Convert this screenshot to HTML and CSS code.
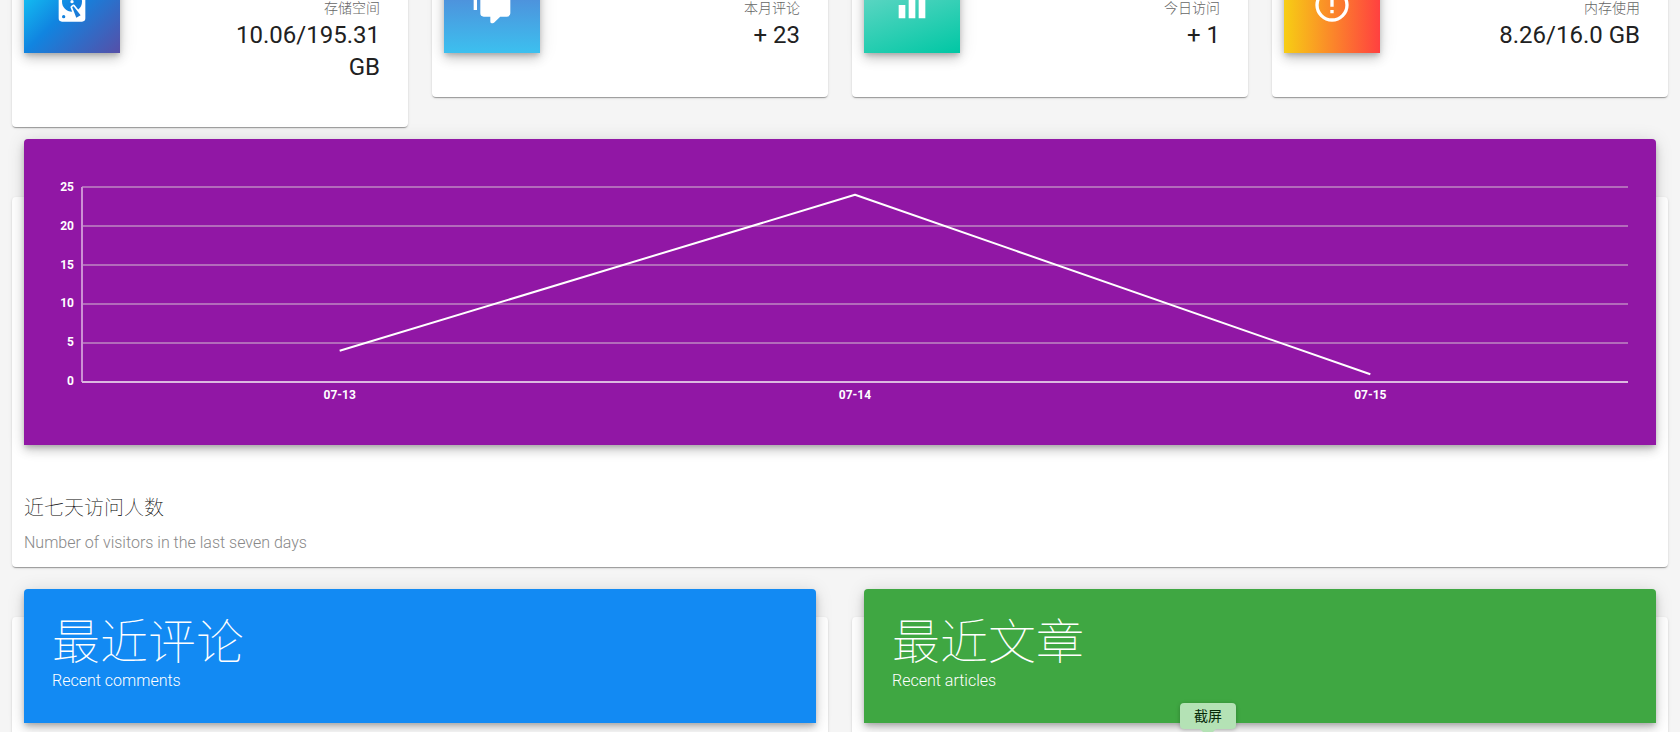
FILE: index.html
```html
<!DOCTYPE html>
<html lang="zh-CN">
<head>
<meta charset="utf-8">
<title>Dashboard</title>
<link rel="stylesheet" href="styles.css">
</head>
<body>
<main class="dashboard">
  <section class="stats">
    <article class="card stat">
      <div class="tile tile-storage">
        <svg class="icon" viewBox="0 0 24 24" aria-hidden="true"><path d="M6,2H18A2,2 0 0,1 20,4V20A2,2 0 0,1 18,22H6A2,2 0 0,1 4,20V4A2,2 0 0,1 6,2M12,4A6,6 0 0,0 6,10C6,13.31 8.69,16 12.1,16L11.22,13.77C10.95,13.29 11.11,12.68 11.59,12.4L12.45,11.9C12.93,11.63 13.54,11.79 13.82,12.27L15.74,14.69C17.12,13.59 18,11.9 18,10A6,6 0 0,0 12,4M12,9A1,1 0 0,1 13,10A1,1 0 0,1 12,11A1,1 0 0,1 11,10A1,1 0 0,1 12,9M7,18A1,1 0 0,0 6,19A1,1 0 0,0 7,20A1,1 0 0,0 8,19A1,1 0 0,0 7,18M12.09,13.27L14.58,19.58L17.17,18.08L12.95,12.77L12.09,13.27Z"/></svg>
      </div>
      <div class="stat-text">
        <p class="stat-label">存储空间</p>
        <p class="stat-value">10.06/195.31 GB</p>
      </div>
    </article>
    <article class="card stat">
      <div class="tile tile-comments">
        <svg class="icon" viewBox="0 0 24 24" aria-hidden="true"><path d="M12,23A1,1 0 0,1 11,22V19H7A2,2 0 0,1 5,17V7A2,2 0 0,1 7,5H21A2,2 0 0,1 23,7V17A2,2 0 0,1 21,19H16.9L13.2,22.71C13,22.89 12.76,23 12.5,23H12M3,15H1V3A2,2 0 0,1 3,1H19V3H3V15Z"/></svg>
      </div>
      <div class="stat-text">
        <p class="stat-label">本月评论</p>
        <p class="stat-value">+ 23</p>
      </div>
    </article>
    <article class="card stat">
      <div class="tile tile-visits">
        <svg class="icon" viewBox="0 0 24 24" aria-hidden="true"><path d="M10 20h4V4h-4v16zM4 20h4v-8H4v8zM16 9v11h4V9h-4z"/></svg>
      </div>
      <div class="stat-text">
        <p class="stat-label">今日访问</p>
        <p class="stat-value">+ 1</p>
      </div>
    </article>
    <article class="card stat">
      <div class="tile tile-memory">
        <svg class="icon" viewBox="0 0 24 24" aria-hidden="true"><path d="M11,15H13V17H11V15M11,7H13V13H11V7M12,2C6.47,2 2,6.5 2,12A10,10 0 0,0 12,22A10,10 0 0,0 22,12A10,10 0 0,0 12,2M12,20A8,8 0 0,1 4,12A8,8 0 0,1 12,4A8,8 0 0,1 20,12A8,8 0 0,1 12,20Z"/></svg>
      </div>
      <div class="stat-text">
        <p class="stat-label">内存使用</p>
        <p class="stat-value">8.26/16.0 GB</p>
      </div>
    </article>
  </section>

  <section class="card visitors">
    <div class="chart">
      <div class="y-labels"><span>25</span><span>20</span><span>15</span><span>10</span><span>5</span><span>0</span></div>
      <svg class="plot" viewBox="0 0 600 25" preserveAspectRatio="none" role="img" aria-label="近七天访问人数">
        <path class="grid-line" d="M0 0H600M0 5H600M0 10H600M0 15H600M0 20H600"/>
        <path class="y-axis" d="M0 0V25"/>
        <path class="x-axis" d="M0 25H600"/>
        <path class="series" d="M100 21L300 1L500 24"/>
      </svg>
      <div class="x-labels"><span>07-13</span><span>07-14</span><span>07-15</span></div>
    </div>
    <div class="caption">
      <h2 class="caption-title">近七天访问人数</h2>
      <p class="caption-sub">Number of visitors in the last seven days</p>
    </div>
  </section>

  <section class="recent">
    <article class="card panel">
      <header class="panel-head panel-blue">
        <h2 class="panel-title">最近评论</h2>
        <p class="panel-sub">Recent comments</p>
      </header>
    </article>
    <article class="card panel">
      <header class="panel-head panel-green">
        <h2 class="panel-title">最近文章</h2>
        <p class="panel-sub">Recent articles</p>
      </header>
      <div class="tooltip" role="tooltip">截屏</div>
    </article>
  </section>
</main>
</body>
</html>
```
FILE: styles.css
```css
* { box-sizing: border-box; }

html { height: 100%; }

body {
  height: 100%;
  margin: 0;
  overflow: hidden;
  background: #f5f5f5;
  color: #212121;
  font-family: Roboto, "Noto Sans CJK SC", sans-serif;
}

h2, p { margin: 0; }

/* The view is scrolled slightly past the top of the stat cards. */
.dashboard {
  display: flex;
  flex-direction: column;
  margin-top: -19px;
  padding: 0 12px;
}

.card {
  background: #fff;
  border-radius: 4px;
  box-shadow: 0 2px 1px -1px rgba(0, 0, 0, .2), 0 1px 1px rgba(0, 0, 0, .14), 0 1px 3px rgba(0, 0, 0, .12);
}

.tile, .chart, .panel-head {
  box-shadow: 0 3px 5px -1px rgba(0, 0, 0, .2), 0 6px 10px rgba(0, 0, 0, .14), 0 1px 18px rgba(0, 0, 0, .12);
}

.stats {
  display: grid;
  grid-template-columns: repeat(4, 1fr);
  align-items: start;
  gap: 24px;
}

.stat {
  display: flex;
  justify-content: space-between;
  align-items: flex-start;
  padding: 0 28px 44px 12px;
}

.tile {
  display: flex;
  align-items: center;
  justify-content: center;
  flex: none;
  width: 96px;
  height: 96px;
  margin-top: -24px;
}

.tile-storage { background: linear-gradient(135deg, #14e6ff, #1184e0 50%, #564fa8); }
.tile-comments { background: linear-gradient(#5b6fce, #3cc0ef); }
.tile-visits { background: linear-gradient(160deg, #84dcd0, #00c7a4); }
.tile-memory { background: linear-gradient(90deg, #f7ce14, #ff4040); }

.icon {
  width: 40px;
  height: 40px;
  fill: #fff;
}

.stat-text {
  width: 42%;
  padding-top: 16px;
  text-align: right;
}

.stat-label {
  color: #666;
  font-size: 14px;
  font-weight: 300;
  line-height: 22px;
}

.stat-value {
  font-size: 24px;
  line-height: 32px;
}

.visitors {
  display: flex;
  flex-direction: column;
  margin-top: 70px;
  padding: 0 12px 11px;
}

.chart {
  display: grid;
  grid-template-columns: 50px 1fr;
  column-gap: 8px;
  align-content: start;
  margin-top: -58px;
  padding: 41px 28px 43px 0;
  border-radius: 4px 4px 0 0;
  background: #9117a5;
  color: #fff;
  font-size: 12px;
  font-weight: 700;
  line-height: 14px;
}

.y-labels {
  display: flex;
  flex-direction: column;
  justify-content: space-between;
  text-align: right;
}

.plot {
  width: 100%;
  height: 195px;
  margin: 7px 0 6px;
  overflow: visible;
}

.plot path {
  fill: none;
  stroke: #fff;
  stroke-width: 2px;
  vector-effect: non-scaling-stroke;
}

.plot .grid-line { stroke: #b36bbb; }
.plot .y-axis { stroke: #cc90d4; }
.plot .x-axis { stroke: #dcb8e0; }
.plot .series { stroke-linejoin: bevel; }

.x-labels {
  display: grid;
  grid-column: 2;
  grid-template-columns: repeat(3, 1fr);
  text-align: center;
}

.caption { padding-top: 45px; }

.caption-title {
  color: #000;
  font-size: 20px;
  font-weight: 100;
  line-height: 36px;
}

.caption-sub {
  padding-top: 4px;
  color: #888;
  font-size: 16px;
  font-weight: 300;
  line-height: 26px;
}

.recent {
  display: grid;
  grid-template-columns: repeat(2, 1fr);
  gap: 24px;
  margin-top: 50px;
}

.panel {
  position: relative;
  display: flex;
  flex-direction: column;
  min-height: 240px;
  padding: 0 12px;
}

.panel-head {
  margin-top: -28px;
  padding: 28px 28px 30px;
  border-radius: 4px 4px 0 0;
  color: #fff;
  font-weight: 300;
}

.panel-blue { background: #128af3; }
.panel-green { background: #3fa742; }

.panel-title {
  font-size: 48px;
  font-weight: 100;
  line-height: 52px;
}

.panel-sub {
  font-size: 16px;
  line-height: 24px;
}

.tooltip {
  position: absolute;
  top: 86px;
  left: 328px;
  padding: 0 14px;
  border-radius: 4px;
  background: #b4e2b5;
  box-shadow: 0 1px 4px rgba(0, 0, 0, .25);
  color: #072a08;
  font-size: 14px;
  line-height: 26px;
}

.tooltip::after {
  content: "";
  position: absolute;
  top: 100%;
  left: 50%;
  margin-left: -8px;
  border: 8px solid transparent;
  border-top-color: #b4e2b5;
}
```
